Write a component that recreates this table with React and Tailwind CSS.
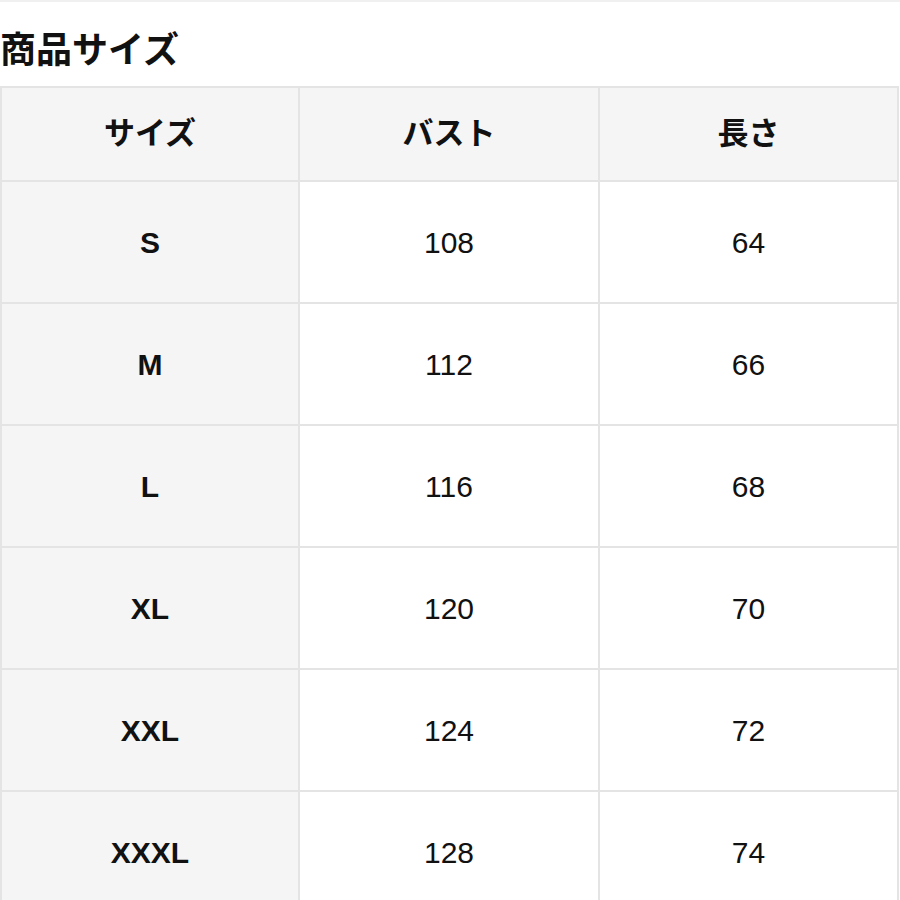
const rows = [
  ["S", "108", "64"],
  ["M", "112", "66"],
  ["L", "116", "68"],
  ["XL", "120", "70"],
  ["XXL", "124", "72"],
  ["XXXL", "128", "74"],
];

export default function App() {
  return (
    <div
      className="w-[900px] h-[900px] overflow-hidden bg-white text-[#111]"
      style={{ fontFamily: '"Liberation Sans", "Noto Sans CJK JP", sans-serif' }}
    >
      <div className="h-[2px] bg-[#f0f0f0]" />
      <h1 className="h-[84px] flex items-center pt-[14px] text-[36px] font-bold">
        商品サイズ
      </h1>
      <div className="grid grid-cols-[296px_298px_297px] gap-[2px] p-[2px] bg-[#e4e4e4] w-[899px]">
        <div className="h-[92px] bg-[#f5f5f5] flex items-center justify-center text-[31px] font-bold">サイズ</div>
        <div className="h-[92px] bg-[#f5f5f5] flex items-center justify-center text-[31px] font-bold">バスト</div>
        <div className="h-[92px] bg-[#f5f5f5] flex items-center justify-center text-[31px] font-bold">長さ</div>
        {rows.map(([size, bust, len]) => (
          <>
            <div key={size + "a"} className="h-[120px] bg-[#f5f5f5] flex items-center justify-center text-[30px] font-bold">{size}</div>
            <div key={size + "b"} className="h-[120px] bg-white flex items-center justify-center text-[30px]">{bust}</div>
            <div key={size + "c"} className="h-[120px] bg-white flex items-center justify-center text-[30px]">{len}</div>
          </>
        ))}
      </div>
    </div>
  );
}
